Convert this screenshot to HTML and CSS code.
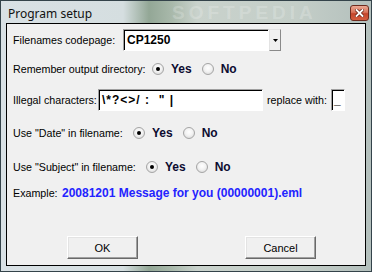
FILE: index.html
```html
<!DOCTYPE html>
<html lang="en">
<head>
    <meta charset="UTF-8">
    <title>Program setup</title>
    <link rel="stylesheet" href="styles.css">
</head>
<body>
    <div class="window">
        <div class="titlebar">
            <span class="title">Program setup</span>
            <span class="watermark">SOFTPEDIA</span>
            <span class="close">
                <svg width="9" height="8" viewBox="0 0 9 8">
                    <path d="M1.5 1 L7.5 7 M7.5 1 L1.5 7" stroke="#6a2416" stroke-width="3.4" stroke-linecap="square"/>
                    <path d="M1.5 1 L7.5 7 M7.5 1 L1.5 7" stroke="#fff" stroke-width="1.8" stroke-linecap="square"/>
                </svg>
            </span>
        </div>
        <div class="client">
            <div class="row row-codepage">
                <span class="label w-codepage">Filenames codepage:</span>
                <div class="combo">
                    <span class="field combo-field">CP1250</span>
                    <span class="combo-btn">
                        <svg width="5" height="3" viewBox="0 0 5 3"><path d="M0 0 H5 L2.5 3 Z" fill="#000"/></svg>
                    </span>
                </div>
            </div>
            <div class="row row-remember">
                <span class="label w-remember">Remember output directory:</span>
                <span class="radio on"></span><span class="opt">Yes</span>
                <span class="radio"></span><span class="opt">No</span>
            </div>
            <div class="row row-illegal">
                <span class="label w-illegal">Illegal characters:</span>
                <span class="field illegal-field">\*?&lt;&gt;/ :  " |</span>
                <span class="label w-replace">replace with:</span>
                <span class="field replace-field">_</span>
            </div>
            <div class="row row-date">
                <span class="label w-date">Use "Date" in filename:</span>
                <span class="radio on"></span><span class="opt">Yes</span>
                <span class="radio"></span><span class="opt">No</span>
            </div>
            <div class="row row-subject">
                <span class="label w-subject">Use "Subject" in filename:</span>
                <span class="radio on"></span><span class="opt">Yes</span>
                <span class="radio"></span><span class="opt">No</span>
            </div>
            <div class="row row-example">
                <span class="label w-example">Example:</span>
                <span class="example-text">20081201 Message for you (00000001).eml</span>
            </div>
            <div class="buttons">
                <button class="btn">OK</button>
                <button class="btn">Cancel</button>
            </div>
        </div>
    </div>
</body>
</html>
```
FILE: styles.css
```css
body {
    margin: 0;
    background: #fff;
}
.window {
    width: 372px;
    height: 272px;
    box-sizing: border-box;
    border: 1px solid #34434a;
    padding: 0 5px 5px;
    background: linear-gradient(to right, #d9e1e5 0, #d5dee0 33%, #93a796 40%, #a8b8aa 46%, #c9d2cc 53%, #c4cec8 80%, #b3bfbc 100%);
    font-family: "Liberation Sans", Arial, sans-serif;
    overflow: hidden;
}
.titlebar {
    display: flex;
    align-items: flex-start;
    height: 22px;
    margin: 0 -5px;
    padding-left: 7px;
    overflow: hidden;
}
.title {
    flex: none;
    white-space: nowrap;
    font-family: "Noto Sans", sans-serif;
    font-size: 12px;
    line-height: 16px;
    margin-top: 5px;
    color: #111;
}
.watermark {
    flex: none;
    white-space: nowrap;
    font-family: "Liberation Sans", sans-serif;
    font-weight: bold;
    font-size: 19px;
    line-height: 20px;
    letter-spacing: 4px;
    margin-left: 80px;
    margin-top: 2px;
    color: rgba(255, 255, 255, 0.2);
}
.close {
    margin-left: auto;
    margin-right: 2px;
    margin-top: 4px;
    width: 19px;
    height: 16px;
    box-sizing: border-box;
    border: 1px solid #6e2b1e;
    border-radius: 3px;
    background: linear-gradient(#eba995, #d9735a 45%, #c3442a 55%, #d45e40);
    display: flex;
    align-items: center;
    justify-content: center;
    flex: none;
}
.client {
    height: 243px;
    box-sizing: border-box;
    border: 1px solid #000;
    background: #f0f0f0;
    padding: 5px 0 0 6px;
    font-size: 10.7px;
    color: #000;
}
.row {
    display: flex;
    align-items: center;
}
.row-codepage { height: 22px; }
.row-remember { height: 16px; margin-top: 10px; }
.row-illegal { height: 22px; margin-top: 12px; }
.row-date { height: 16px; margin-top: 14px; }
.row-subject { height: 16px; margin-top: 18px; }
.row-example { height: 16px; margin-top: 10px; }
.label {
    flex: none;
    white-space: nowrap;
}
.w-codepage { width: 110px; }
.w-remember { width: 139px; }
.w-illegal { width: 85px; }
.w-replace { width: 64px; margin-left: 4px; }
.w-date { width: 120px; }
.w-subject { width: 133px; }
.w-example { width: 49px; }
.field {
    box-sizing: border-box;
    height: 22px;
    background: #fff;
    border-top: 1px solid #a0a0a0;
    border-left: 1px solid #a0a0a0;
    border-right: 1px solid #fff;
    border-bottom: 1px solid #fff;
    box-shadow: inset 1px 1px 0 #000;
    font-weight: bold;
    font-size: 12px;
    line-height: 20px;
    padding-left: 3px;
    white-space: pre;
    color: #000;
}
.combo {
    display: flex;
    width: 158px;
    height: 22px;
}
.combo-field {
    flex: 1;
}
.combo-btn {
    width: 12px;
    box-sizing: border-box;
    background: #f0f0f0;
    border-top: 1px solid #e3e3e3;
    border-left: 1px solid #e3e3e3;
    border-right: 1px solid #8a8a8a;
    border-bottom: 1px solid #8a8a8a;
    display: flex;
    align-items: center;
    justify-content: center;
}
.illegal-field {
    width: 165px;
    letter-spacing: 1px;
}
.replace-field {
    width: 14px;
    padding-left: 2px;
}
.radio {
    flex: none;
    width: 12px;
    height: 12px;
    box-sizing: border-box;
    border-radius: 50%;
    border: 1px solid #a5a5a5;
    background: radial-gradient(circle at 50% 40%, #fff 0, #f3f3f3 45%, #d2d2d2 100%);
    display: flex;
    align-items: center;
    justify-content: center;
}
.radio.on::after {
    content: "";
    width: 4px;
    height: 4px;
    border-radius: 50%;
    background: #000;
}
.opt {
    font-weight: bold;
    font-size: 12px;
    margin-left: 7px;
    color: #0c0c30;
}
.opt + .radio {
    margin-left: 10px;
}
.example-text {
    color: #2323ff;
    font-weight: bold;
    font-size: 12px;
    white-space: nowrap;
}
.buttons {
    display: flex;
    margin-top: 35px;
    padding-left: 54px;
    gap: 107px;
}
.btn {
    width: 71px;
    height: 23px;
    box-sizing: border-box;
    padding: 0;
    font-family: "Liberation Sans", Arial, sans-serif;
    font-size: 11px;
    color: #000;
    background: #f0f0f0;
    border: 1px solid;
    border-color: #fff #696969 #696969 #fff;
    box-shadow: inset -1px -1px 0 #a0a0a0, inset 1px 1px 0 #e3e3e3;
}
```
